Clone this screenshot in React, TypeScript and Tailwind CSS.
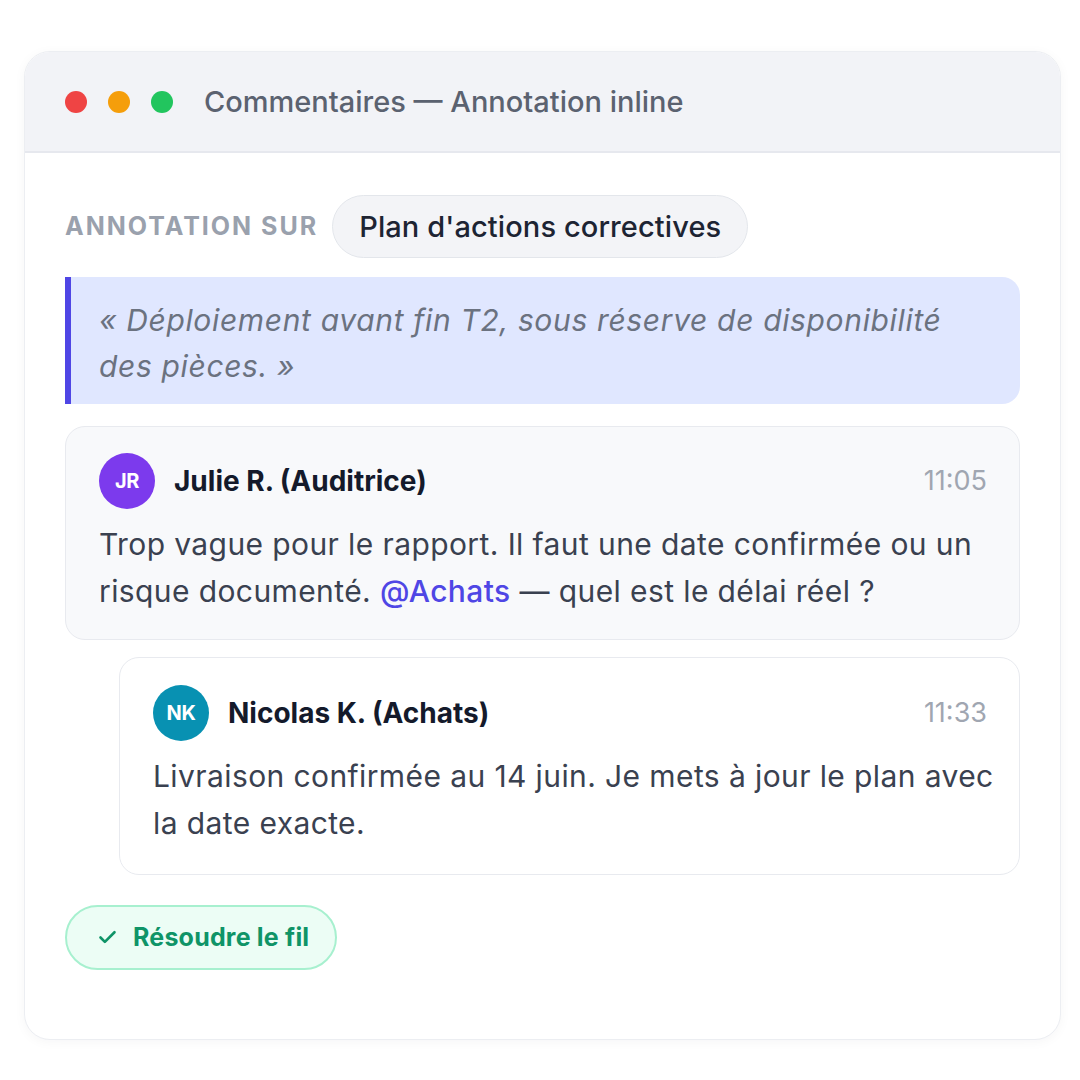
import { Check } from 'lucide-react';

const font = { fontFamily: 'Inter, "Noto Sans", sans-serif' };

function Avatar({ initials, color }: { initials: string; color: string }) {
  return (
    <div className={`w-[56px] h-[56px] rounded-full flex items-center justify-center text-white text-[20px] font-bold tracking-[-0.3px] ${color}`}>
      {initials}
    </div>
  );
}

function Comment({ initials, color, name, time, children, className }: {
  initials: string; color: string; name: string; time: string; children: React.ReactNode; className: string;
}) {
  return (
    <div className={`rounded-[20px] border border-[#e8eaef] pl-[33px] pr-[24px] ${className}`}>
      <div className="flex items-center">
        <Avatar initials={initials} color={color} />
        <span className="ml-[19px] text-[28px] font-bold text-[#141a2b]">{name}</span>
        <span className="ml-auto mr-[8px] text-[27px] text-[#a0a6b1]">{time}</span>
      </div>
      <p className="mt-[12px] text-[30px] leading-[47px] text-[#3a4150] tracking-[0.4px]">{children}</p>
    </div>
  );
}

export default function App() {
  return (
    <div className="w-[1080px] h-[1080px] bg-white pt-[51px] pl-[24px]" style={font}>
      <div className="w-[1037px] h-[989px] rounded-[26px] bg-white border border-[#eceef2] shadow-[0_2px_12px_rgba(15,23,42,0.04)] overflow-hidden">
        <div className="h-[101px] bg-[#f2f3f7] border-b-2 border-[#e6e8ee] flex items-center pl-[40px]">
          <div className="w-[22px] h-[22px] rounded-full bg-[#ef4444]" />
          <div className="w-[22px] h-[22px] rounded-full bg-[#f59e0b] ml-[21px]" />
          <div className="w-[22px] h-[22px] rounded-full bg-[#22c55e] ml-[21px]" />
          <span className="ml-[31px] text-[29px] font-medium text-[#5b6270]">Commentaires — Annotation inline</span>
        </div>

        <div className="px-[40px] pt-[42px]">
          <div className="flex items-center">
            <span className="text-[25px] font-bold text-[#9aa1ad] tracking-[2px] uppercase">Annotation sur</span>
            <span className="ml-[14px] h-[63px] px-[26px] flex items-center rounded-full bg-[#f3f4f7] border border-[#e3e6eb] text-[29px] font-medium text-[#1d2433] tracking-[0.1px]">
              Plan d'actions correctives
            </span>
          </div>

          <div className="mt-[19px] bg-[#e0e7ff] border-l-[6px] border-[#4f46e5] rounded-r-[18px] pl-[28px] pr-[40px] pt-[20px] pb-[15px]">
            <p className="italic text-[30px] leading-[46px] text-[#6b7280] tracking-[0.65px]">
              « Déploiement avant fin T2, sous réserve de disponibilité des pièces. »
            </p>
          </div>

          <Comment initials="JR" color="bg-[#7c3aed]" name="Julie R. (Auditrice)" time="11:05" className="mt-[22px] bg-[#f8f9fb] pt-[26px] pb-[24px]">
            Trop vague pour le rapport. Il faut une date confirmée ou un risque documenté.{' '}
            <span className="text-[#4f46e5] font-medium">@Achats</span> — quel est le délai réel ?
          </Comment>

          <Comment initials="NK" color="bg-[#0891b2]" name="Nicolas K. (Achats)" time="11:33" className="mt-[17px] ml-[54px] bg-white pt-[27px] pb-[27px]">
            Livraison confirmée au 14 juin. Je mets à jour le plan avec la date exacte.
          </Comment>

          <button className="mt-[30px] h-[65px] pl-[30px] pr-[26px] flex items-center gap-[15px] rounded-full bg-[#ecfdf5] border-2 border-[#a7f0cf] text-[#0f9467] text-[25px] font-bold tracking-[0.2px]">
            <Check size={21} strokeWidth={3} />
            Résoudre le fil
          </button>
        </div>
      </div>
    </div>
  );
}
